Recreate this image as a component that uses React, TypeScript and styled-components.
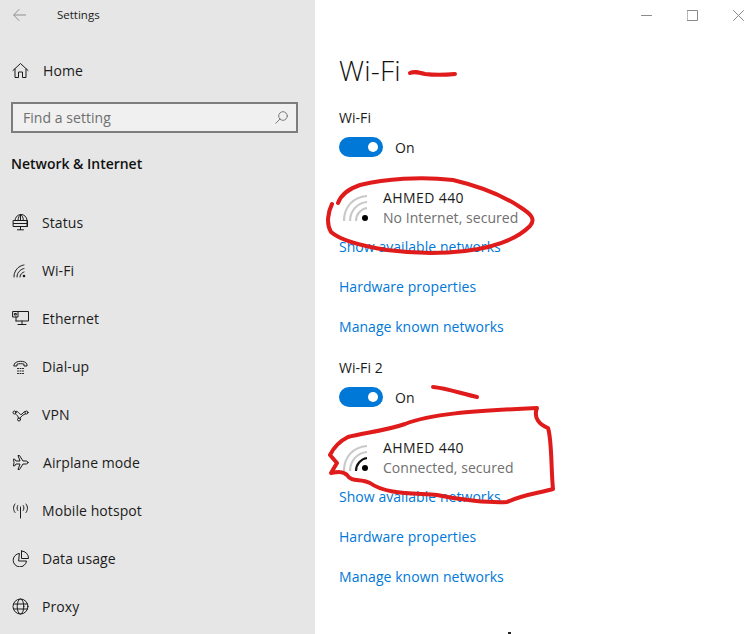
import styled, { createGlobalStyle } from "styled-components";
import type { ReactNode } from "react";

const Global = createGlobalStyle`
  html, body {
    margin: 0;
    padding: 0;
    background: #fff;
    overflow: hidden;
  }
  * {
    box-sizing: border-box;
  }
`;

const Window = styled.div`
  position: relative;
  width: 754px;
  height: 634px;
  display: flex;
  overflow: hidden;
  font-family: "Open Sans", "Noto Sans", sans-serif;
  color: #000;
`;

const Sidebar = styled.div`
  width: 315px;
  height: 100%;
  background: #e6e6e6;
  display: flex;
  flex-direction: column;
  flex-shrink: 0;
`;

const TitleBar = styled.div`
  height: 30px;
  margin-bottom: 16px;
  display: flex;
  align-items: center;
  padding: 0 0 1px 13px;
  font-size: 11.5px;
  color: #1a1a1a;
`;

const BackIcon = styled.svg`
  width: 13px;
  height: 12px;
  margin-right: 31px;
  color: #8f8f8f;
`;

const NavRow = styled.div<{ $gap?: number }>`
  height: 48px;
  display: flex;
  align-items: center;
  padding-left: 12px;
  font-size: 14px;
  color: #1c1c1c;
  letter-spacing: 0.08px;
  svg {
    width: 17px;
    height: 17px;
    flex-shrink: 0;
    margin-right: ${({ $gap }) => $gap ?? 13}px;
    color: #1a1a1a;
  }
`;

const SearchBox = styled.div`
  margin: 8px 17px 0 11px;
  height: 31px;
  border: 2px solid #7d7d7d;
  background: #f0f0f0;
  display: flex;
  align-items: center;
  justify-content: space-between;
  padding: 0 8px 0 10px;
  font-size: 14px;
  letter-spacing: 0.05px;
  color: #6f6f6f;
`;

const SearchIcon = styled.svg`
  width: 13px;
  height: 13px;
  color: #7a7a7a;
`;

const GroupTitle = styled.div`
  margin: 21px 0 24px 11px;
  line-height: 20px;
  font-size: 14px;
  font-weight: 600;
  letter-spacing: -0.02px;
  color: #111;
`;

const Content = styled.div`
  flex: 1;
  padding-left: 24px;
  display: flex;
  flex-direction: column;
`;

const WindowControls = styled.div`
  height: 30px;
  margin: 0 -7px 0 -24px;
  display: flex;
  justify-content: flex-end;
`;

const ControlButton = styled.div`
  width: 46px;
  height: 30px;
  display: flex;
  align-items: center;
  justify-content: center;
  svg {
    width: 11px;
    height: 11px;
    color: #8a8a8a;
  }
`;

const PageTitle = styled.h1`
  margin: 20px 0 18px;
  font-size: 28px;
  line-height: 40px;
  font-weight: 300;
  letter-spacing: 0.2px;
  color: #111;
`;

const Adapter = styled.section`
  height: 250px;
  display: flex;
  flex-direction: column;
`;

const Label = styled.div`
  font-size: 14px;
  line-height: 20px;
  letter-spacing: 0.05px;
  color: #1a1a1a;
`;

const ToggleRow = styled.div`
  margin-top: 9px;
  height: 20px;
  display: flex;
  align-items: center;
  gap: 12px;
  font-size: 14px;
  letter-spacing: 0.05px;
  color: #1a1a1a;
`;

const Toggle = styled.div`
  width: 44px;
  height: 20px;
  border-radius: 10px;
  background: #0078d7;
  display: flex;
  align-items: center;
  justify-content: flex-end;
  padding-right: 5px;
  &::after {
    content: "";
    width: 10px;
    height: 10px;
    border-radius: 50%;
    background: #fff;
  }
`;

const Network = styled.div`
  margin-top: 31px;
  display: flex;
  align-items: center;
  height: 40px;
  svg {
    width: 30px;
    height: 30px;
    margin: 0 10px 0 4px;
    flex-shrink: 0;
  }
`;

const NetworkText = styled.div`
  display: flex;
  flex-direction: column;
  font-size: 14px;
  line-height: 20px;
  letter-spacing: 0.05px;
`;

const NetworkName = styled.span`
  color: #1a1a1a;
  letter-spacing: 0.4px;
`;

const NetworkStatus = styled.span`
  color: #6f6f6f;
`;

const LinkList = styled.div`
  margin-top: 9px;
  display: flex;
  flex-direction: column;
  gap: 20px;
`;

const TextLink = styled.a`
  font-size: 14px;
  line-height: 20px;
  letter-spacing: 0.05px;
  color: #0078d7;
`;

const Scribbles = styled.svg`
  position: absolute;
  left: 0;
  top: 0;
  width: 754px;
  height: 634px;
  pointer-events: none;
`;

const line = {
  fill: "none",
  stroke: "currentColor",
  strokeWidth: 1,
  strokeLinecap: "round" as const,
  strokeLinejoin: "round" as const,
};

const HomeIcon = () => (
  <svg viewBox="0 0 17 17" {...line}>
    <path d="M1 8.500 8.500 1.500 16 8.500M3 7v8.500h3.500V10h4v5.500H14V7" />
  </svg>
);
const StatusIcon = () => (
  <svg viewBox="0 0 17 17" {...line}>
    <path d="M3 6.500a6 6 0 0 1 12 0v6M6 6.500C6.200 3.500 7.300 1 8.700 1s2.500 2.500 2.700 5.500M1.500 6.500h14v6h-14zM1.500 9.500h14M8.500 12.500v3M5.500 15.800h6M8.500 1v5.500" />
  </svg>
);
const WifiSmallIcon = () => (
  <svg viewBox="0 0 17 17" {...line}>
    <path d="M2 15C2 9 6 4 12 3M5 15c0-4 3-7.500 7-8.500M8 15c0-2 1.500-4 4-5" strokeDasharray="2 .6" />
    <circle cx="12" cy="14" r="1.300" fill="currentColor" stroke="none" />
  </svg>
);
const EthernetIcon = () => (
  <svg viewBox="0 0 17 17" {...line}>
    <path d="M4 1.500h12.500v9.500H4M1 1.500h5v5.500H1zM2.800 3.500h1.500v1.500H2.800zM4 7v4M10 11v3.500M6 14.500h8" />
  </svg>
);
const DialUpIcon = () => (
  <svg viewBox="0 0 17 17" {...line}>
    <path d="M2 7C2 2 15 2 15 7v1h-3V6.200C10 5.500 7 5.500 5 6.200V8H2z" />
    <path d="M5.500 10.500h1M8 10.500h1M10.500 10.500h1M5.500 13h1M8 13h1M10.500 13h1M5.500 15.500h1M8 15.500h1M10.500 15.500h1" />
  </svg>
);
const VpnIcon = () => (
  <svg viewBox="0 0 17 17" {...line}>
    <circle cx="2.500" cy="6.500" r="1.500" />
    <circle cx="14.500" cy="6.500" r="1.500" />
    <circle cx="7" cy="13.500" r="1.500" />
    <path d="M3.500 5.500C6 4 7 8.500 9 8.500S11 5 13.500 5.500M3.500 7.800C5 9 6 10 6.500 12M8 12.500C9 10 11 9 13.500 7.800" />
  </svg>
);
const PlaneIcon = () => (
  <svg viewBox="0 0 17 17" {...line}>
    <path d="M16 8.500c0-1-1-1.500-2-1.500h-3L7.500 1.500H6L8 7H4L2.500 5H1.500l.5 3.500L1.500 12h1L4 10h4l-2 5.500h1.500L11 10h3c1 0 2-.5 2-1.500z" />
  </svg>
);
const HotspotIcon = () => (
  <svg viewBox="0 0 17 17" {...line}>
    <path d="M8.500 5v11M5.800 3.500c-1 1.500-1 3.500 0 5M11.200 3.500c1 1.500 1 3.500 0 5M3 2c-2 2.500-2 6 0 8.500M14 2c2 2.500 2 6 0 8.500" />
  </svg>
);
const PieIcon = () => (
  <svg viewBox="0 0 17 17" {...line}>
    <path d="M7 3.500a6.700 6.700 0 1 0 7.500 7.500H7zM9.500 1v7.500H16.500A7 7 0 0 0 9.500 1z" />
  </svg>
);
const GlobeIcon = () => (
  <svg viewBox="0 0 17 17" {...line}>
    <circle cx="8.500" cy="8.500" r="7.500" />
    <ellipse cx="8.500" cy="8.500" rx="3.300" ry="7.500" />
    <path d="M1.500 6h14M1.500 11h14" />
  </svg>
);

const WifiStrength = ({ connected }: { connected?: boolean }) => (
  <svg viewBox="0 0 30 30" fill="none" strokeLinecap="butt">
    <path d="M1 28C1 14 10 4 24 3" stroke="#c9c9c9" strokeWidth="2.200" />
    <path d="M7 28C7 18 14 10 24 9" stroke="#c9c9c9" strokeWidth="2.200" />
    <path
      d="M13 28C13 21 18 16 24 15"
      stroke={connected ? "#111" : "#c9c9c9"}
      strokeWidth="2.200"
    />
    <circle cx="22" cy="25" r="3" fill="#000" />
  </svg>
);

const navItems: { label: string; icon: ReactNode; gap?: number }[] = [
  { label: "Status", icon: <StatusIcon /> },
  { label: "Wi-Fi", icon: <WifiSmallIcon /> },
  { label: "Ethernet", icon: <EthernetIcon /> },
  { label: "Dial-up", icon: <DialUpIcon /> },
  { label: "VPN", icon: <VpnIcon /> },
  { label: "Airplane mode", icon: <PlaneIcon />, gap: 14 },
  { label: "Mobile hotspot", icon: <HotspotIcon /> },
  { label: "Data usage", icon: <PieIcon /> },
  { label: "Proxy", icon: <GlobeIcon /> },
];

const adapters = [
  { name: "Wi-Fi", status: "No Internet, secured", connected: false },
  { name: "Wi-Fi 2", status: "Connected, secured", connected: true },
];

const App = () => {
  return (
    <Window>
      <Global />
      <Sidebar>
        <TitleBar>
          <BackIcon viewBox="0 0 13 12" {...line}>
            <path d="M6 .500.700 6 6 11.500M1 6h12" />
          </BackIcon>
          Settings
        </TitleBar>
        <NavRow $gap={14}>
          <HomeIcon />
          Home
        </NavRow>
        <SearchBox>
          Find a setting
          <SearchIcon viewBox="0 0 13 13" {...line}>
            <circle cx="8" cy="5" r="4.300" />
            <path d="M5 8 .800 12.300" />
          </SearchIcon>
        </SearchBox>
        <GroupTitle>Network &amp; Internet</GroupTitle>
        {navItems.map((item) => (
          <NavRow key={item.label} $gap={item.gap}>
            {item.icon}
            {item.label}
          </NavRow>
        ))}
      </Sidebar>
      <Content>
        <WindowControls>
          <ControlButton>
            <svg viewBox="0 0 11 11" {...line}>
              <path d="M.500 5.500h10" />
            </svg>
          </ControlButton>
          <ControlButton>
            <svg viewBox="0 0 11 11" {...line}>
              <rect x=".5" y=".5" width="10" height="10" />
            </svg>
          </ControlButton>
          <ControlButton>
            <svg viewBox="0 0 11 11" {...line}>
              <path d="M.500.500l10 10M10.500.500l-10 10" />
            </svg>
          </ControlButton>
        </WindowControls>
        <PageTitle>Wi-Fi</PageTitle>
        {adapters.map((a) => (
          <Adapter key={a.name}>
            <Label>{a.name}</Label>
            <ToggleRow>
              <Toggle />
              On
            </ToggleRow>
            <Network>
              <WifiStrength connected={a.connected} />
              <NetworkText>
                <NetworkName>AHMED 440</NetworkName>
                <NetworkStatus>{a.status}</NetworkStatus>
              </NetworkText>
            </Network>
            <LinkList>
              <TextLink>Show available networks</TextLink>
              <TextLink>Hardware properties</TextLink>
              <TextLink>Manage known networks</TextLink>
            </LinkList>
          </Adapter>
        ))}
      </Content>
      <Scribbles viewBox="0 0 754 634" fill="none" stroke="#e01b1b" strokeWidth="4" strokeLinecap="round" strokeLinejoin="round">
        <path d="M410 73C414 71 418 72 425 74 433 75 445 75 455 74" />
        <path d="M433 387C445 388 460 393 477 397" />
        <path d="M332 204C328 212 326 224 331 232 340 240 362 246 387 250 410 253 440 254 465 251 490 248 515 241 530 226 536 219 531 214 520 207 505 197 487 188 453 180 420 176 385 179 360 185 348 189 341 195 338 203" />
        <path d="M331 473 337 463 330 455C334 447 340 441 348 437 362 433 385 431 405 424 430 414 470 411 537 408 533 418 540 425 548 428 552 440 551 470 553 489 540 493 525 494 507 502 490 503 460 500 437 495 410 493 385 494 370 483 360 478 352 483 347 475 343 471 337 472 331 473Z" />
        <rect x="508" y="632" width="3" height="2" fill="#222" stroke="none" />
      </Scribbles>
    </Window>
  );
};

export default App;
